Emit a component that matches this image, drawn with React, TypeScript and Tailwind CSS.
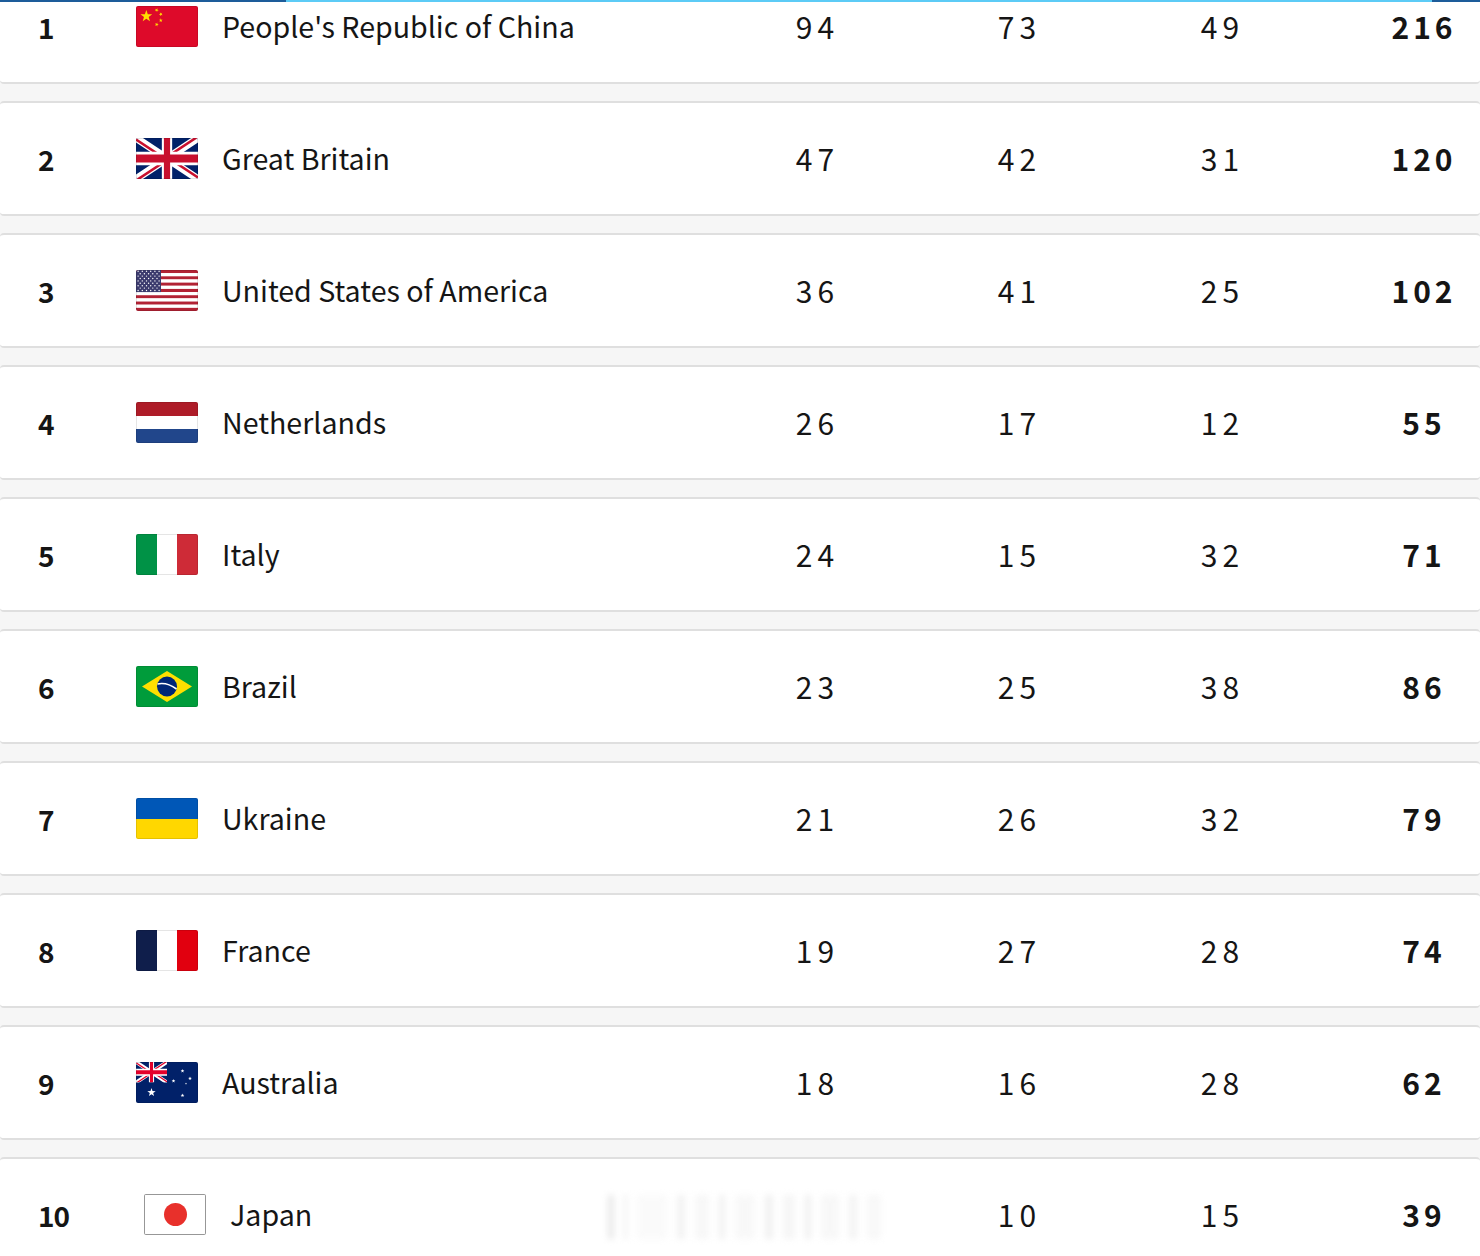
import * as React from 'react'

const star = (cx: number, cy: number, r: number, rot = 0) => {
  const pts: string[] = []
  for (let i = 0; i < 10; i++) {
    const rr = i % 2 === 0 ? r : r * 0.4
    const a = rot + (Math.PI / 5) * i - Math.PI / 2
    pts.push(`${(cx + rr * Math.cos(a)).toFixed(2)},${(cy + rr * Math.sin(a)).toFixed(2)}`)
  }
  return pts.join(' ')
}

const UnionJack = ({ id }: { id: string }) => (
  <svg viewBox="0 0 60 30" preserveAspectRatio="none" width="100%" height="100%">
    <clipPath id={`${id}-s`}>
      <path d="M0,0 v30 h60 v-30 z" />
    </clipPath>
    <clipPath id={`${id}-t`}>
      <path d="M30,15 h30 v15 z v15 h-30 z h-30 v-15 z v-15 h30 z" />
    </clipPath>
    <g clipPath={`url(#${id}-s)`}>
      <path d="M0,0 v30 h60 v-30 z" fill="#012169" />
      <path d="M0,0 L60,30 M60,0 L0,30" stroke="#fff" strokeWidth="6" />
      <path d="M0,0 L60,30 M60,0 L0,30" clipPath={`url(#${id}-t)`} stroke="#C8102E" strokeWidth="4" />
      <path d="M30,0 v30 M0,15 h60" stroke="#fff" strokeWidth="10" />
      <path d="M30,0 v30 M0,15 h60" stroke="#C8102E" strokeWidth="6" />
    </g>
  </svg>
)

const Flag = ({ code }: { code: string }) => {
  let inner: React.ReactNode = null
  if (code === 'CHN') {
    inner = (
      <svg viewBox="0 0 30 20" preserveAspectRatio="none" width="100%" height="100%">
        <rect width="30" height="20" fill="#DE0A2A" />
        <polygon points={star(5, 5, 3)} fill="#FFDE00" />
        <polygon points={star(10, 2, 1, 0.4)} fill="#FFDE00" />
        <polygon points={star(12, 4, 1, 0.8)} fill="#FFDE00" />
        <polygon points={star(12, 7, 1, 0)} fill="#FFDE00" />
        <polygon points={star(10, 9, 1, 0.3)} fill="#FFDE00" />
      </svg>
    )
  } else if (code === 'GBR') {
    inner = <UnionJack id="gb" />
  } else if (code === 'USA') {
    const stripes = []
    for (let i = 0; i < 13; i++) {
      stripes.push(<rect key={i} y={(i * 41) / 13} width="62" height={41 / 13} fill={i % 2 === 0 ? '#B22234' : '#fff'} />)
    }
    const dots = []
    for (let r = 0; r < 9; r++) {
      const n = r % 2 === 0 ? 6 : 5
      for (let c = 0; c < n; c++) {
        dots.push(<circle key={`${r}-${c}`} cx={(r % 2 === 0 ? 2.1 : 4.2) + c * 4.2} cy={1.3 + r * 2.4} r="0.7" fill="#fff" />)
      }
    }
    inner = (
      <svg viewBox="0 0 62 41" preserveAspectRatio="none" width="100%" height="100%">
        {stripes}
        <rect width="25" height={(41 * 7) / 13} fill="#3C3B6E" />
        {dots}
      </svg>
    )
  } else if (code === 'NED') {
    inner = (
      <div className="flex flex-col h-full">
        <div className="flex-1 bg-[#AE1C28]" />
        <div className="flex-1 bg-white" />
        <div className="flex-1 bg-[#21468B]" />
      </div>
    )
  } else if (code === 'ITA') {
    inner = (
      <div className="flex h-full">
        <div className="flex-1 bg-[#009246]" />
        <div className="flex-1 bg-white" />
        <div className="flex-1 bg-[#CE2B37]" />
      </div>
    )
  } else if (code === 'FRA') {
    inner = (
      <div className="flex h-full">
        <div className="flex-1 bg-[#0F1E4B]" />
        <div className="flex-1 bg-white" />
        <div className="flex-1 bg-[#E1000F]" />
      </div>
    )
  } else if (code === 'UKR') {
    inner = (
      <div className="flex flex-col h-full">
        <div className="flex-1 bg-[#0057B7]" />
        <div className="flex-1 bg-[#FFD700]" />
      </div>
    )
  } else if (code === 'BRA') {
    inner = (
      <svg viewBox="0 0 62 41" preserveAspectRatio="none" width="100%" height="100%">
        <rect width="62" height="41" fill="#009C3B" />
        <polygon points="6,20.5 31,5 56,20.5 31,36" fill="#FFDF00" />
        <circle cx="31" cy="20.5" r="10" fill="#002776" />
        <path d="M21.5,18 Q31,16 40.5,23" stroke="#fff" strokeWidth="1.6" fill="none" />
      </svg>
    )
  } else if (code === 'AUS') {
    inner = (
      <svg viewBox="0 0 62 41" preserveAspectRatio="none" width="100%" height="100%">
        <rect width="62" height="41" fill="#012169" />
        <svg x="0" y="0" width="31" height="20.5" viewBox="0 0 60 30" preserveAspectRatio="none">
          <clipPath id="au-s">
            <path d="M0,0 v30 h60 v-30 z" />
          </clipPath>
          <clipPath id="au-t">
            <path d="M30,15 h30 v15 z v15 h-30 z h-30 v-15 z v-15 h30 z" />
          </clipPath>
          <g clipPath="url(#au-s)">
            <path d="M0,0 L60,30 M60,0 L0,30" stroke="#fff" strokeWidth="6" />
            <path d="M0,0 L60,30 M60,0 L0,30" clipPath="url(#au-t)" stroke="#E4002B" strokeWidth="4" />
            <path d="M30,0 v30 M0,15 h60" stroke="#fff" strokeWidth="10" />
            <path d="M30,0 v30 M0,15 h60" stroke="#E4002B" strokeWidth="6" />
          </g>
        </svg>
        <polygon points={star(15.5, 30.5, 4.4)} fill="#fff" />
        <polygon points={star(46.5, 33.5, 2)} fill="#fff" />
        <polygon points={star(37.5, 19, 2)} fill="#fff" />
        <polygon points={star(46.5, 9, 2)} fill="#fff" />
        <polygon points={star(54, 16.5, 2)} fill="#fff" />
        <polygon points={star(50, 21.5, 1.1)} fill="#fff" />
      </svg>
    )
  } else if (code === 'JPN') {
    inner = (
      <div className="h-full flex items-center justify-center bg-white border border-[#a9a9a9]">
        <div className="w-[23px] h-[23px] rounded-full bg-[#E8302B]" />
      </div>
    )
  }
  return (
    <div className="relative w-[62px] h-[41px] shrink-0 overflow-hidden rounded-[2px]">
      {inner}
      <div className="absolute inset-0 rounded-[2px] border border-black/10" />
    </div>
  )
}

type Row = { rank: number; name: string; code: string; g?: number; s: number; b: number; t: number }

const rows: Row[] = [
  { rank: 1, name: "People's Republic of China", code: 'CHN', g: 94, s: 73, b: 49, t: 216 },
  { rank: 2, name: 'Great Britain', code: 'GBR', g: 47, s: 42, b: 31, t: 120 },
  { rank: 3, name: 'United States of America', code: 'USA', g: 36, s: 41, b: 25, t: 102 },
  { rank: 4, name: 'Netherlands', code: 'NED', g: 26, s: 17, b: 12, t: 55 },
  { rank: 5, name: 'Italy', code: 'ITA', g: 24, s: 15, b: 32, t: 71 },
  { rank: 6, name: 'Brazil', code: 'BRA', g: 23, s: 25, b: 38, t: 86 },
  { rank: 7, name: 'Ukraine', code: 'UKR', g: 21, s: 26, b: 32, t: 79 },
  { rank: 8, name: 'France', code: 'FRA', g: 19, s: 27, b: 28, t: 74 },
  { rank: 9, name: 'Australia', code: 'AUS', g: 18, s: 16, b: 28, t: 62 },
  { rank: 10, name: 'Japan', code: 'JPN', s: 10, b: 15, t: 39 },
]

const font = { fontFamily: '"Noto Sans CJK SC", "Noto Sans", sans-serif' }

const MedalRow = ({ row }: { row: Row }) => {
  const shifted = row.rank === 10
  return (
    <div className="relative h-[115px] shrink-0 bg-white border-y-2 border-[#dfdfdf] rounded-[4px] flex items-center text-[#151515]">
      <div className="flex items-center pl-[38px] w-[714px]">
        <div className={`${shifted ? 'w-[106px]' : 'w-[98px]'} text-[28px] font-bold tracking-[-1px]`}>{row.rank}</div>
        <Flag code={row.code} />
        <div className="ml-[24px] text-[28.6px] leading-none">{row.name}</div>
      </div>
      <div className="w-[202px] text-center text-[30px] tracking-[5px] pl-[5px]">{row.g ?? ''}</div>
      <div className="w-[202px] text-center text-[30px] tracking-[5px] pl-[5px]">{row.s}</div>
      <div className="w-[202px] text-center text-[30px] tracking-[5px] pl-[7px]">{row.b}</div>
      <div className="ml-[44px] w-[116px] text-center text-[30px] font-bold tracking-[4px] pl-[4px]">{row.t}</div>
      {shifted && (
        <div className="absolute left-[608px] top-[36px] w-[275px] h-[44px] flex items-stretch gap-[10px] blur-[3px] opacity-40">
          <div className="w-[6px] bg-[#c8c8c8]" />
          <div className="w-[3px] bg-[#d8d8d8]" />
          <div className="w-[30px] bg-[#f3f3f3]" />
          <div className="w-[8px] bg-[#e0e0e0]" />
          <div className="w-[14px] bg-[#ececec]" />
          <div className="w-[6px] bg-[#dddddd]" />
          <div className="w-[20px] bg-[#efefef]" />
          <div className="w-[8px] bg-[#dcdcdc]" />
          <div className="w-[12px] bg-[#e8e8e8]" />
          <div className="w-[6px] bg-[#dadada]" />
          <div className="w-[18px] bg-[#ededed]" />
          <div className="w-[8px] bg-[#e2e2e2]" />
          <div className="w-[14px] bg-[#eeeeee]" />
        </div>
      )}
    </div>
  )
}

export default function App() {
  return (
    <div className="relative w-[1480px] h-[1256px] overflow-hidden bg-[#f6f6f6]" style={font}>
      <div className="flex flex-col gap-[17px] -mt-[31px]">
        {rows.map((r) => (
          <MedalRow key={r.rank} row={r} />
        ))}
      </div>
      <div className="absolute top-0 left-0 right-0 h-[2px] flex">
        <div className="w-[286px] bg-[#1d5c9a]" />
        <div className="flex-1 bg-[#5ccbf6]" />
        <div className="w-[48px] bg-[#1d5c9a]" />
      </div>
    </div>
  )
}
